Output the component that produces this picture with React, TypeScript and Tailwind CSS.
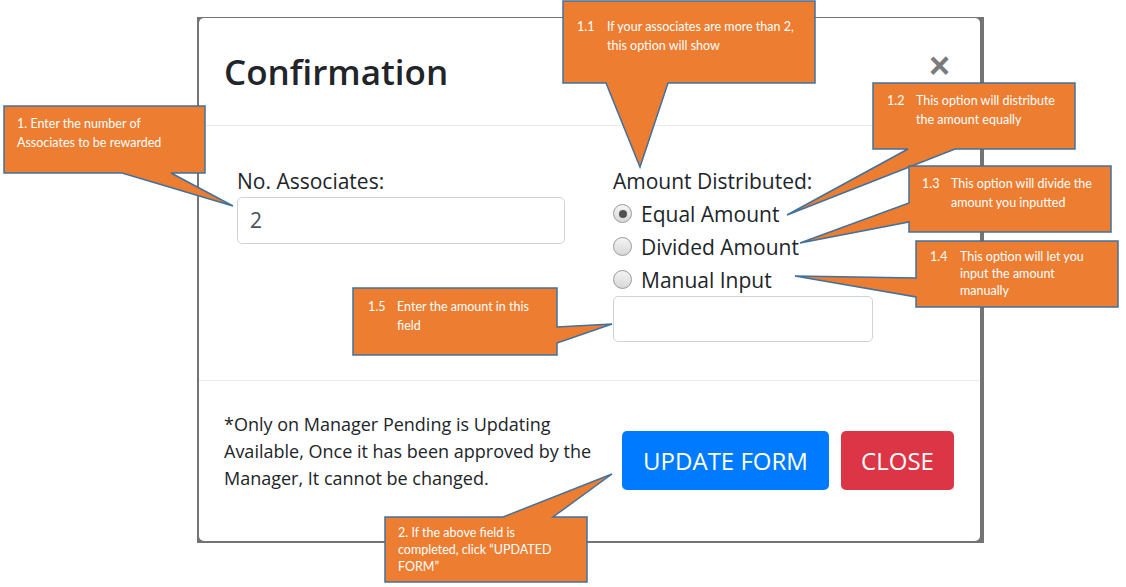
const callouts: { pts: string; num?: string; lines: string[]; x: number; y: number; tab?: number; lead: string; w: number }[] = [
  {
    pts: "4,106 205,106 205,173 171,173 233,206 122,173 4,173",
    lines: ["1. Enter the number of", "Associates to be rewarded"],
    x: 17,
    y: 114,
    lead: "leading-[19px]",
    w: 185,
  },
  {
    pts: "563,1 815,1 815,83 668,83 640,167 606,83 563,83",
    num: "1.1",
    lines: ["If your associates are more than 2,", "this option will show"],
    x: 577,
    y: 17,
    tab: 30,
    lead: "leading-[19px]",
    w: 235,
  },
  {
    pts: "873,83 1075,83 1075,149 955,149 787,215 908,149 873,149",
    num: "1.2",
    lines: ["This option will distribute", "the amount equally"],
    x: 887,
    y: 91,
    tab: 29,
    lead: "leading-[19px]",
    w: 185,
  },
  {
    pts: "909,166 1111,166 1111,232 909,232 909,222 800,243 909,203",
    num: "1.3",
    lines: ["This option will divide the", "amount you inputted"],
    x: 922,
    y: 174,
    tab: 29,
    lead: "leading-[19px]",
    w: 185,
  },
  {
    pts: "916,241 1118,241 1118,307 916,307 916,297 795,276 916,278",
    num: "1.4",
    lines: ["This option will let you", "input the amount", "manually"],
    x: 930,
    y: 248,
    tab: 30,
    lead: "leading-[17px]",
    w: 185,
  },
  {
    pts: "353,288 557,288 557,327 612,324 557,343 557,355 353,355",
    num: "1.5",
    lines: ["Enter the amount in this", "field"],
    x: 368,
    y: 297,
    tab: 29,
    lead: "leading-[19px]",
    w: 185,
  },
  {
    pts: "385,517 503,517 612,474 553,517 587,517 587,582 385,582",
    lines: ["2. If the above field is", "completed, click \u201cUPDATED", "FORM\u201d"],
    x: 398,
    y: 524,
    lead: "leading-[17px]",
    w: 185,
  },
];

const Radio = ({ checked, label }: { checked?: boolean; label: string }) => (
  <div className="flex h-[33px] items-center">
    <span className="flex h-[19px] w-[19px] items-center justify-center rounded-full border border-[#9a9a9a] bg-gradient-to-b from-[#f4f4f4] to-[#d8d8d8]">
      {checked && <span className="h-[8px] w-[8px] rounded-full bg-[#505050]" />}
    </span>
    <span className="ml-[9px] text-[21px] leading-[28px] text-[#212529]">{label}</span>
  </div>
);

export default function App() {
  return (
    <div className="relative h-[587px] w-[1126px] overflow-hidden bg-white font-['Open_Sans',sans-serif]">
      <div className="ml-[197px] mt-[17px] h-[526px] w-[787px] bg-[#747474] pb-[2px] pl-[2px] pr-[4px] pt-[1px]">
        <div className="flex h-full flex-col rounded-[5px] bg-white">
          {/* header */}
          <div className="flex h-[108px] shrink-0 items-center justify-between border-b border-[#e9ecef] pl-[25px] pr-[30px]">
            <h1 className="text-[35px] font-semibold leading-[43px] text-[#212529]">Confirmation</h1>
            <span className="-mt-[12px] font-['Liberation_Sans',sans-serif] text-[36px] font-bold leading-none text-[#7b7b7b]">
              ×
            </span>
          </div>

          {/* body */}
          <div className="flex h-[255px] shrink-0 border-b border-[#e9ecef] pl-[38px] pt-[41px]">
            <div className="w-[376px]">
              <div className="text-[21px] leading-[28px] text-[#212529]">No. Associates:</div>
              <div className="mt-[2px] flex h-[47px] w-[328px] items-center rounded-[5px] border border-[#ced4da] px-[12px] text-[21px] text-[#495057]">
                2
              </div>
            </div>
            <div>
              <div className="text-[21px] leading-[28px] text-[#212529]">Amount Distributed:</div>
              <div className="mt-[2px]">
                <Radio checked label="Equal Amount" />
                <Radio label="Divided Amount" />
                <Radio label="Manual Input" />
              </div>
              <div className="h-[46px] w-[260px] rounded-[5px] border border-[#ced4da]" />
            </div>
          </div>

          {/* footer */}
          <div className="flex flex-1 items-start justify-between pl-[25px] pr-[26px]">
            <p className="mt-[30px] text-[18px] leading-[27px] text-[#212529]">
              *Only on Manager Pending is Updating
              <br />
              Available, Once it has been approved by the
              <br />
              Manager, It cannot be changed.
            </p>
            <div className="mt-[50px] flex gap-[12px]">
              <button className="h-[59px] w-[207px] rounded-[5px] bg-[#007bff] text-[24px] text-white">UPDATE FORM</button>
              <button className="h-[59px] w-[113px] rounded-[5px] bg-[#dc3545] text-[24px] text-white">CLOSE</button>
            </div>
          </div>
        </div>
      </div>

      {/* annotation callouts */}
      <svg className="pointer-events-none absolute inset-0" width="1126" height="587">
        {callouts.map((c, i) => (
          <polygon key={i} points={c.pts} fill="#ed7d31" stroke="#41719c" strokeWidth="1.5" strokeLinejoin="miter" />
        ))}
      </svg>
      {callouts.map((c, i) => (
        <div
          key={i}
          className={`absolute flex font-['Lato',sans-serif] text-[12.5px] text-white ${c.lead}`}
          style={{ left: c.x, top: c.y, width: c.w }}
        >
          {c.num && (
            <span className="shrink-0" style={{ width: c.tab }}>
              {c.num}
            </span>
          )}
          <div>
            {c.lines.map((l, j) => (
              <div key={j} className="whitespace-nowrap">
                {l}
              </div>
            ))}
          </div>
        </div>
      ))}
    </div>
  );
}
